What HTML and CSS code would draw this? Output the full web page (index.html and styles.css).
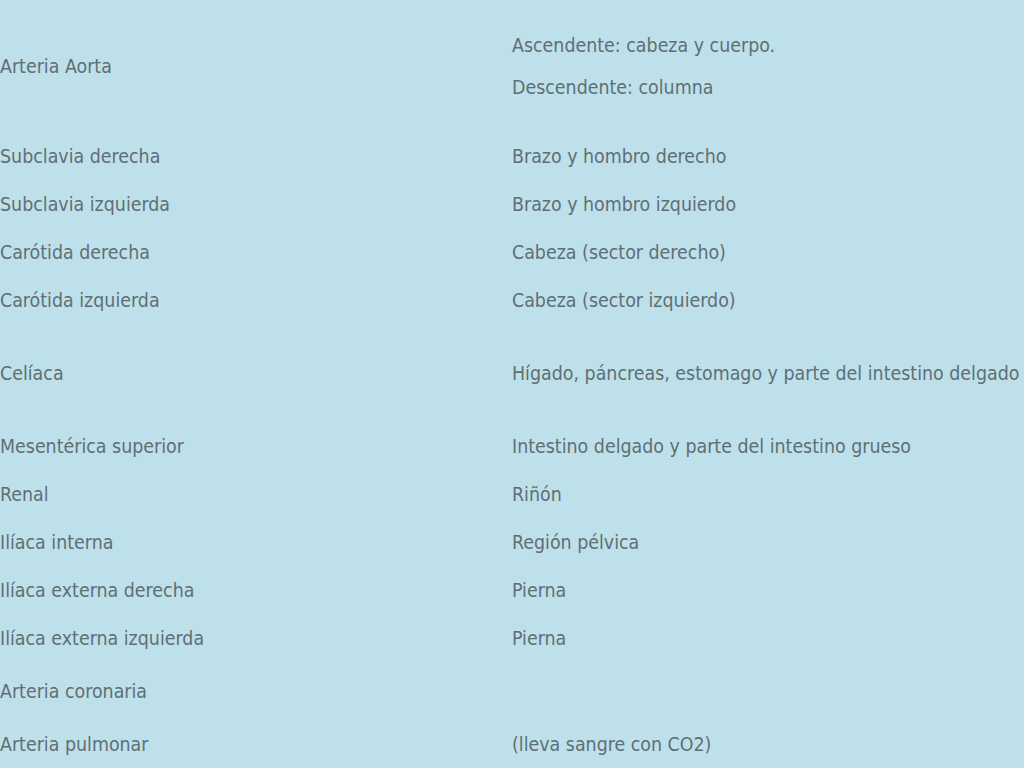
FILE: index.html
```html
<!DOCTYPE html>
<html lang="es">
<head>
<meta charset="utf-8">
<title>Arterias</title>
<link rel="stylesheet" href="styles.css">
</head>
<body>
<div class="table">
  <div class="row r-aorta">
    <div class="cell">Arteria Aorta</div>
    <div class="cell stack"><p>Ascendente: cabeza y cuerpo.</p><p>Descendente: columna</p></div>
  </div>
  <div class="row"><div class="cell">Subclavia derecha</div><div class="cell">Brazo y hombro derecho</div></div>
  <div class="row"><div class="cell">Subclavia izquierda</div><div class="cell">Brazo y hombro izquierdo</div></div>
  <div class="row"><div class="cell">Carótida derecha</div><div class="cell">Cabeza (sector derecho)</div></div>
  <div class="row"><div class="cell">Carótida izquierda</div><div class="cell">Cabeza (sector izquierdo)</div></div>
  <div class="row r-tall"><div class="cell">Celíaca</div><div class="cell">Hígado, páncreas, estomago y parte del intestino delgado</div></div>
  <div class="row"><div class="cell">Mesentérica superior</div><div class="cell">Intestino delgado y parte del intestino grueso</div></div>
  <div class="row"><div class="cell">Renal</div><div class="cell">Riñón</div></div>
  <div class="row"><div class="cell">Ilíaca interna</div><div class="cell">Región pélvica</div></div>
  <div class="row"><div class="cell">Ilíaca externa derecha</div><div class="cell">Pierna</div></div>
  <div class="row"><div class="cell">Ilíaca externa izquierda</div><div class="cell">Pierna</div></div>
  <div class="row r-mid"><div class="cell">Arteria coronaria</div><div class="cell"></div></div>
  <div class="row"><div class="cell">Arteria pulmonar</div><div class="cell">(lleva sangre con CO2)</div></div>
</div>
</body>
</html>
```
FILE: styles.css
```css
html, body {
  margin: 0;
  padding: 0;
  background: #bee0ea;
}
body {
  width: 1024px;
  height: 768px;
  overflow: hidden;
  font-family: "DejaVu Sans Condensed", "DejaVu Sans", sans-serif;
  font-size: 19.4px;
  color: #5e6f74;
}
.table {
  display: flex;
  flex-direction: column;
  padding-top: 1px;
}
.row {
  display: grid;
  grid-template-columns: 512px 1fr;
  height: 48px;
}
.r-aorta { height: 132px; }
.r-tall { height: 98px; }
.r-mid { height: 58px; }
.cell {
  display: flex;
  flex-direction: column;
  justify-content: center;
  line-height: 24px;
  white-space: nowrap;
}
.stack { gap: 18px; }
.stack p { margin: 0; }
```
